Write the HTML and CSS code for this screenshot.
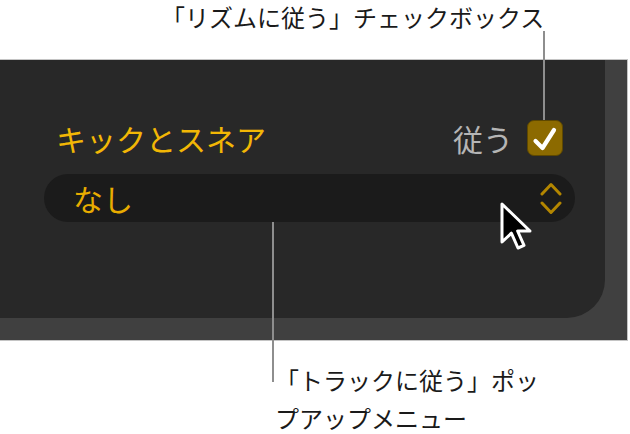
FILE: index.html
```html
<!DOCTYPE html>
<html lang="ja">
<head>
<meta charset="utf-8">
<link rel="stylesheet" href="styles.css">
</head>
<body>
<div class="page">
  <div class="top-note">「リズムに従う」チェックボックス</div>
  <div class="panel">
    <div class="inner">
      <div class="row">
        <span class="label">キックとスネア</span>
        <span class="follow">
          <span class="follow-text">従う</span>
          <span class="checkbox">
            <svg width="36" height="36" viewBox="0 0 36 36"><path d="M8.5 21 L15.5 28 L27 10" fill="none" stroke="#fff" stroke-width="4.2" stroke-linecap="round" stroke-linejoin="round"/></svg>
          </span>
        </span>
      </div>
      <div class="popup">
        <span class="popup-value">なし</span>
        <svg class="stepper" width="22" height="34" viewBox="0 0 22 34"><path d="M2 13 L11 3.5 L20 13" fill="none" stroke="#b38600" stroke-width="3" stroke-linecap="round" stroke-linejoin="round"/><path d="M2 22 L11 31.5 L20 22" fill="none" stroke="#b38600" stroke-width="3" stroke-linecap="round" stroke-linejoin="round"/></svg>
      </div>
    </div>
  </div>
  <div class="bottom-note">
    <span class="note-line">「トラックに従う」ポッ</span>
    <span class="note-line note-last">プアップメニュー</span>
  </div>
  <div class="callout callout-check"></div>
  <div class="callout callout-popup"></div>
  <svg class="cursor" width="36" height="52" viewBox="0 0 36 52"><path d="M3 3 L3 41 L12.4 32.2 L19 47 L25 44.4 L18.6 30 L31 30 Z" fill="#000" stroke="#fff" stroke-width="3" stroke-linejoin="round"/></svg>
</div>
</body>
</html>
```
FILE: styles.css
```css
html, body {
  margin: 0;
  padding: 0;
  background: #fff;
}
body {
  font-family: "Noto Sans CJK JP", "Noto Sans", sans-serif;
}
.page {
  position: relative;
  width: 630px;
  height: 434px;
  overflow: hidden;
}
.top-note {
  height: 59px;
  padding-left: 161px;
  font-size: 24px;
  line-height: 34px;
  color: #1a1a1a;
  box-sizing: border-box;
}
.panel {
  width: 628px;
  height: 282px;
  box-sizing: border-box;
  background: #404040;
  border-top: 1px solid #c4c4c4;
  border-bottom: 1px solid #c4c4c4;
  border-right: 1px solid #c4c4c4;
}
.inner {
  width: 605px;
  height: 258px;
  box-sizing: border-box;
  background: #282828;
  border-bottom-right-radius: 38px;
  padding: 60px 30px 0 44px;
  display: flex;
  flex-direction: column;
  gap: 18px;
}
.row {
  display: flex;
  align-items: center;
  justify-content: space-between;
  padding: 0 12px;
  height: 36px;
}
.label {
  font-size: 30px;
  line-height: 36px;
  color: #f2b705;
}
.follow {
  display: flex;
  align-items: center;
  gap: 14px;
}
.follow-text {
  font-size: 30px;
  line-height: 36px;
  color: #b5b5b5;
}
.checkbox {
  width: 36px;
  height: 36px;
  box-sizing: border-box;
  border-radius: 7px;
  background: #8c6a00;
  border: 1px solid #5e4800;
  display: flex;
  align-items: center;
  justify-content: center;
}
.checkbox svg {
  display: block;
  flex: none;
}
.popup {
  height: 48px;
  border-radius: 24px;
  background: #1b1b1b;
  display: flex;
  align-items: center;
  justify-content: space-between;
  padding: 0 13px 0 29px;
}
.popup-value {
  font-size: 30px;
  line-height: 40px;
  color: #e8ac00;
}
.stepper {
  display: block;
}
.bottom-note {
  margin-top: 20px;
  padding-left: 275px;
  font-size: 24px;
  color: #1a1a1a;
}
.note-line {
  display: block;
  line-height: 38px;
}
.note-last {
  line-height: 26px;
  margin-top: 6px;
}
.callout {
  position: absolute;
  width: 2px;
  background: #8e8e8e;
}
.callout-check {
  left: 543px;
  top: 31px;
  height: 89px;
}
.callout-popup {
  left: 272px;
  top: 222px;
  height: 160px;
}
.cursor {
  position: absolute;
  left: 499px;
  top: 201px;
}
```
